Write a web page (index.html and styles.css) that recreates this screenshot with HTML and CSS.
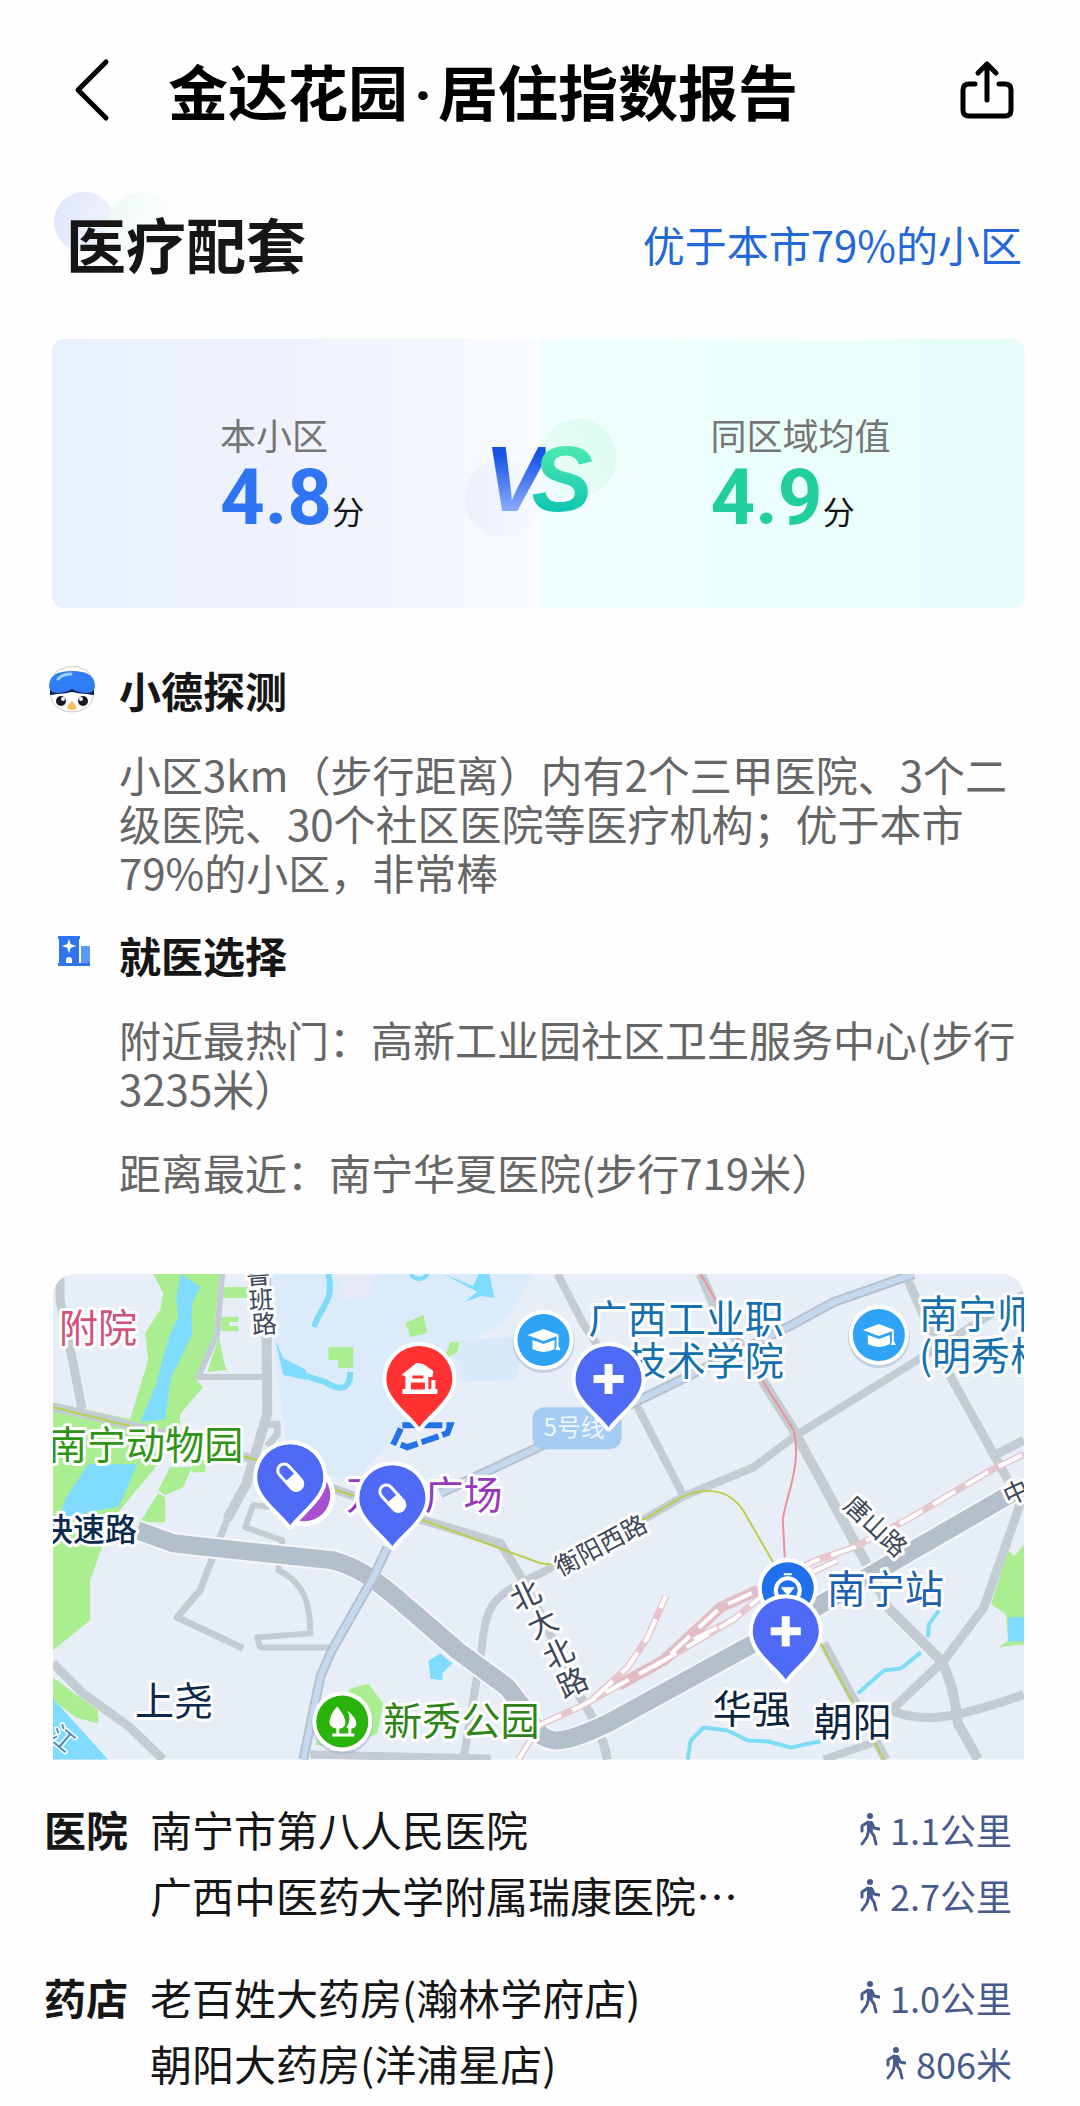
FILE: index.html
```html
<!DOCTYPE html>
<html lang="zh-CN">
<head>
  <meta charset="UTF-8" />
  <meta name="viewport" content="width=device-width, initial-scale=1.0" />
  <title>金达花园·居住指数报告</title>
  <link rel="stylesheet" href="styles.css">
</head>

<body>
  <header class="topbar">
    <button class="icon-btn" type="button" aria-label="返回">
      <svg width="40" height="64" viewBox="0 0 40 64" fill="none" stroke="#000" stroke-width="5" stroke-linecap="round" stroke-linejoin="round">
        <path d="M36 4 8 32l28 28"/>
      </svg>
    </button>
    <h1>金达花园<span class="dot">·</span>居住指数报告</h1>
    <button class="icon-btn" type="button" aria-label="分享">
      <svg width="56" height="60" viewBox="0 0 56 60" fill="none" stroke="#000" stroke-width="5" stroke-linecap="round" stroke-linejoin="round">
        <path d="M15 24H9q-6 0-6 6v20q0 6 6 6h36q6 0 6-6V30q0-6-6-6h-6M27 40V5M18 13 27 4l9 9"/>
      </svg>
    </button>
  </header>

  <main>
    <div class="section-head">
      <h2>医疗配套</h2>
      <a href="#rank">优于本市79%的小区</a>
    </div>

    <div class="compare">
      <div class="side mine">
        <p class="label">本小区</p>
        <p class="score"><b>4.8</b><span>分</span></p>
      </div>
      <div class="side avg">
        <p class="label">同区域均值</p>
        <p class="score"><b>4.9</b><span>分</span></p>
      </div>
      <div class="vs"><span class="v">V</span><span class="s">S</span></div>
    </div>

    <div class="tips">
      <section class="tip">
        <svg class="tip-icon" width="46" height="48" viewBox="0 0 46 48">
          <path d="M5 12Q6 3 14 3Q18-1 23 1Q29-1 33 3Q41 3 42 13L45 28Q42 46 23 46T1 28Z" fill="#fff" stroke="#c9c9c9"/>
          <path d="M1 20V29Q5 29 8 28Q15 28 23 26Q31 28 38 28Q41 29 45 29V20Z" fill="#12245e"/>
          <path d="M0 20Q0 5 23 5T46 20Q46 26 38 27Q30 27 23 23Q16 27 8 27Q0 26 0 20Z" fill="#2f7df2"/>
          <path d="M9 13q5-5 13-5" stroke="#9fd0ff" stroke-width="3" fill="none" stroke-linecap="round"/>
          <circle cx="12" cy="35" r="5" fill="#171a22"/>
          <circle cx="34" cy="35" r="5" fill="#171a22"/>
          <circle cx="14" cy="33" r="2" fill="#fff"/>
          <circle cx="32" cy="33" r="2" fill="#fff"/>
          <path d="M23 35q3 3 5 7q-5 4-10 0q2-5 5-7Z" fill="#f2bf5e"/>
        </svg>
        <div class="tip-body">
          <h3>小德探测</h3>
          <p>小区3km（步行距离）内有2个三甲医院、3个二级医院、30个社区医院等医疗机构；优于本市79%的小区，非常棒</p>
        </div>
      </section>

      <section class="tip">
        <svg class="tip-icon" width="46" height="40" viewBox="-5 0 46 40">
          <path d="M4 5h22v3h-1v24H5V8H4Z" fill="#2f74ee"/>
          <path d="M27 16q0-1 1-1h7q1 0 1 1v16h-9Z" fill="#5b97f7"/>
          <path d="M4 32h32v3H4Z" fill="#2f74ee"/>
          <path d="M15 11l1 3 3 1-3 1-1 3-1-3-3-1 3-1Z" fill="#fff" stroke="#fff" stroke-width="2"/>
          <path d="M12 32v-3q0-3 3-3t3 3v3Z" fill="#fff"/>
        </svg>
        <div class="tip-body">
          <h3>就医选择</h3>
          <p>附近最热门：高新工业园社区卫生服务中心(步行3235米）</p>
          <p>距离最近：南宁华夏医院(步行719米）</p>
        </div>
      </section>
    </div>

    <div class="map">
      <svg viewBox="0 0 970 485" role="img" aria-label="周边医疗地图">
        <defs>
          <path id="pin" d="M0 48C-10 34-33 20-33 0A33 33 0 0 1 33 0C33 20 10 34 0 48Z"/>
          <g id="cap">
            <circle r="31" fill="#9fb3c8" opacity=".5" cy="2"/>
            <circle r="30" fill="#fff"/>
            <circle r="26" fill="#2fa3f5"/>
            <path d="M-16-5 0-11 16-5 0 1ZM-11 0 0 4 11 0V9Q0 15-11 9ZM13-4h2V6l2 4h-5l1-4Z" fill="#fff"/>
          </g>
          <g id="pill" transform="rotate(-42)">
            <rect x="-8" y="-17" width="16" height="34" rx="8" fill="#fff"/>
            <path d="M-5 0v-9a5 5 0 0 1 10 0v9Z" fill="#4f6bf6"/>
          </g>
          <path id="plus" d="M-4-15h8V-4h11v8H4v11h-8V4h-11v-8h11Z" fill="#fff"/>
        </defs>

        <rect width="970" height="485" fill="#e8eef8"/>
        <path d="M220 0H480L450 50 420 64 407 66V105L345 160 310 198 285 205 235 182 222 86Z" fill="#dcebfa"/>
        <path d="M407 66 470 62 464 106 407 108Z" fill="#d9e9fa"/>
        <path d="M285 0h36l-5 24-26 2Z" fill="#e6eaf6"/>

        <!-- parks -->
        <g fill="#abee91">
          <path d="M100 0 110 19 107 36 92 59 95 86 77 145 0 128V376L37 346V306L50 270 55 250 105 190 127 160V140L150 113 142 105 160 70 166 0Z"/>
          <path d="M0 403 45 436V449L23 443 0 426Z"/>
          <path d="M170 13h24v11h-24ZM168 43h17v5h-9v4h9v5h-17ZM154 98 166 62 169 80 173 96Z"/>
          <path d="M275 73h25v21h-15v-8h-10ZM352 49 370 41 374 59 357 63ZM397 68h9l-2 10-14 8Z"/>
          <path d="M117 193h22l-9 20-18 8-7-5ZM139 186h14l-1 12h-13ZM87 248 105 219 112 223V248Z"/>
          <path d="M297 414 315 409 330 429 324 459 290 475 262 470Z"/>
          <path d="M954 276 960 282 970 270V370L945 373 954 366 952 340 937 330Z"/>
        </g>

        <!-- water -->
        <g fill="#7fdcff">
          <path d="M128 0 147 13 139 30V60L127 86 118 103 112 145 87 148 103 110 110 83 117 60 125 43 123 23Z"/>
          <path d="M35 190H84L66 232 28 240 6 246 12 225Z"/>
          <path d="M0 424 55 485H0ZM222 66 230 84 253 96V106L230 101Z"/>
          <path d="M375 386 387 379 399 389 389 399V406L377 404ZM954 343h16v24h-16Z"/>
          <path d="M390 0 420 12 425 0H436L441 24 428 22 411 28 424 18Z"/>
        </g>
        <g class="stream">
          <path class="wide" d="M275 0C282 28 265 35 261 53M250 101 272 108Q297 123 297 98"/>
          <path d="M357 0q8 10 18 0"/>
          <path d="M634 485 637 466 650 453 674 456 694 466 714 467 737 473 770 466"/>
          <path d="M804 419 830 396 847 394 867 378M874 363 875 350 885 336"/>
        </g>

        <!-- roads -->
        <g class="road">
          <path d="M7 0V26L20 89 29 135" stroke-width="9"/>
          <path d="M0 133 45 143 110 160 204 186 284 216 370 246 447 269 469 305 492 350 527 423Q548 455 554 485" stroke-width="9"/>
          <path d="M169 0 164 60 145 103H210" stroke-width="6"/>
          <path d="M213 0 214 140 193 210 174 245" stroke-width="10"/>
          <path d="M214 150h10v10l-10 12M174 245 147 316 124 343 190 374" stroke-width="7"/>
          <path d="M240 235 200 231 192 253 229 266 225 296C254 310 257 335 257 359L204 363 207 373H277" stroke-width="6"/>
          <path d="M504 0 530 50 584 133 630 222" stroke-width="8"/>
          <path d="M647 0 660 30 694 83 740 156 785 239 820 303 834 333 887 386Q900 410 904 449L924 485" stroke-width="10"/>
          <path d="M410 485 428 376C433 330 437 322 487 299L594 243 630 222 700 193 744 160 870 82 900 63 970 20" stroke-width="8"/>
          <path d="M854 6 897 103 954 206M937 183 970 166" stroke-width="9"/>
          <path d="M970 215 964 236 930 333 890 386 837 436C870 450 905 443 970 420" stroke-width="9"/>
          <path d="M770 485 820 468M257 480 437 484" stroke-width="8"/>
          <path d="M0 389 30 419 77 453 110 485" stroke-width="9"/>
        </g>
        <path class="express-edge" d="M84 256 120 269 137 271 280 286C304 293 320 303 354 333L404 376 454 413 475 440C488 474 505 472 554 449L700 369 774 326 854 279 970 212"/>
        <path class="express" d="M84 256 120 269 137 271 280 286C304 293 320 303 354 333L404 376 454 413 475 440C488 474 505 472 554 449L700 369 774 326 854 279 970 212"/>
        <g class="metro-road">
          <path d="M334 273 320 303 277 379 267 403 250 485"/>
          <path d="M387 219 487 172 594 122 734 53 780 28 860 0"/>
        </g>
        <g class="metro-line">
          <path d="M334 273 320 303 277 379 267 403 250 485"/>
          <path d="M387 219 487 172 594 122 734 53 780 28 860 0"/>
        </g>
        <path d="M770 369 832 485" stroke="#c3ccd2" stroke-width="9"/>
        <g class="line-green">
          <path d="M0 133 110 160 204 186 284 216 370 246 487 289 504 291 594 243 630 222C665 208 684 224 694 244L720 289M767 369 830 485"/>
        </g>
        <path d="M647 0 694 83 740 156C748 190 733 220 729 245L731 283" fill="none" stroke="#f28e98" stroke-width="2"/>

        <!-- railway -->
        <g class="rail-base">
          <path d="M465 485 487 450 527 432 610 386 667 333 704 316 760 287 800 273 854 245 937 196 970 180"/>
          <path d="M540 424 574 393 594 363 612 322M600 392 680 345 715 316M640 365 680 345M760 297 784 286"/>
        </g>
        <path d="M565 411 610 386 667 333 704 316" fill="none" stroke="#e3bcc6" stroke-width="11"/>
        <g class="rail-dash">
          <path d="M465 485 487 450 527 432 610 386 667 333 704 316 760 287 800 273 854 245 937 196 970 180"/>
          <path d="M540 424 574 393 594 363 612 322M600 392 680 345 715 316M640 365 680 345M760 297 784 286"/>
        </g>

        <!-- estate outline -->
        <path d="M349 151H397L394 159 354 173 341 168Z" fill="none" stroke="#2472e4" stroke-width="6" stroke-dasharray="18 4"/>

        <rect x="479" y="133" width="89" height="42" rx="12" fill="#a5cdf3"/>
        <text class="label-line" x="490" y="162">5号线</text>

        <g class="place">
          <text x="6" y="68" fill="#d0527a">附院</text>
          <text x="190" y="185" text-anchor="end" fill="#2f9418">南宁动物园</text>
          <text x="449" y="235" text-anchor="end" fill="#9438bd">万达广场</text>
          <text x="730" y="59" text-anchor="end" fill="#1470ae">广西工业职</text>
          <text x="730" y="101" text-anchor="end" fill="#1470ae">技术学院</text>
          <text x="865" y="54" fill="#1470ae">南宁师</text>
          <text x="865" y="96" fill="#1470ae">(明秀校</text>
          <text x="773" y="329" fill="#1c5fae">南宁站</text>
          <text x="330" y="461" fill="#2f8418">新秀公园</text>
          <text x="82" y="441" fill="#0c2a4d">上尧</text>
          <text x="659" y="449" fill="#0c2540">华强</text>
          <text x="760" y="462" fill="#0c2540">朝阳</text>
        </g>
        <text class="place-sm" x="84" y="267" text-anchor="end">快速路</text>

        <g class="street">
          <text transform="translate(205 1) rotate(-4)" y="9">鲁</text>
          <text transform="translate(208 26) rotate(-4)" y="9">班</text>
          <text transform="translate(211 50) rotate(-4)" y="9">路</text>
          <text transform="translate(547 271) rotate(-28)" y="9">衡阳西路</text>
          <text transform="translate(822 252) rotate(43)" y="9">唐山路</text>
          <text transform="translate(962 218) rotate(-25)" y="9">中</text>
          <g class="big">
            <text transform="translate(472 321) rotate(-25)" y="11">北</text>
            <text transform="translate(489 349) rotate(-25)" y="11">大</text>
            <text transform="translate(505 379) rotate(-25)" y="11">北</text>
            <text transform="translate(519 408) rotate(-25)" y="11">路</text>
          </g>
          <text class="river-name" transform="translate(9 464) rotate(40)" y="9">江</text>
        </g>

        <!-- round markers -->
        <use href="#cap" x="490" y="66"/>
        <use href="#cap" x="825" y="61"/>
        <circle cx="251" cy="221" r="31" fill="#fff"/>
        <circle cx="251" cy="221" r="26" fill="#a64fd0"/>
        <g transform="translate(289 447)">
          <circle r="31" fill="#9fb3c8" opacity=".5" cy="2"/>
          <circle r="30" fill="#fff"/>
          <circle r="26" fill="#2bb30d"/>
          <path d="M-5-15Q4-4 3 2Q2 7-3 7V12H6V7L4 6Q10-2 5-11Q15-3 14 3Q13 7 9 7V12H12V15H-10V12H-6V7Q-12 6-13 1Q-12-8-5-15Z" fill="#fff"/>
        </g>
        <g transform="translate(734 314)">
          <circle r="30" fill="#fff"/>
          <circle r="26" fill="#2070ee"/>
          <circle r="12" cy="2" fill="none" stroke="#fff" stroke-width="4"/>
          <path d="M-4-14h8M-5 0h10l-5 6Z" stroke="#fff" stroke-width="2" fill="#fff"/>
        </g>

        <!-- pins -->
        <g class="pin">
          <g transform="translate(366 105)">
            <use href="#pin" fill="#ff3131"/>
            <path d="M-18-4-3-16 4-15 14-8 13-2H9V10H12V1H16V10H18V15H-17V10H-14V-3Z" fill="#fff"/>
            <path d="M-7-2H4M-7 5H4V9H-7Z" stroke="#ff3131" stroke-width="3" fill="#ff3131"/>
          </g>
          <g transform="translate(237 203)"><use href="#pin" fill="#4f6bf6"/><use href="#pill"/></g>
          <g transform="translate(339 224)"><use href="#pin" fill="#4f6bf6"/><use href="#pill"/></g>
          <g transform="translate(555 105)"><use href="#pin" fill="#4f6bf6"/><use href="#plus"/></g>
          <g transform="translate(732 357)"><use href="#pin" fill="#4f6bf6"/><use href="#plus"/></g>
        </g>
      </svg>
    </div>

    <svg class="sprite" width="0" height="0" aria-hidden="true">
      <symbol id="walk" viewBox="0 0 20 34">
        <circle cx="10" cy="4" r="3" fill="#475c8d"/>
        <path d="M7 9h5l1 10-6 1Z" fill="#475c8d"/>
        <path d="M8 10 2 14v5M12 11l2 5 5 1M9 17l-2 8-5 7M10 18l4 6 2 8" fill="none" stroke="#475c8d" stroke-width="3" stroke-linecap="round" stroke-linejoin="round"/>
      </symbol>
    </svg>

    <div class="places">
      <section class="group">
        <h3>医院</h3>
        <ul>
          <li><span>南宁市第八人民医院</span><span class="dist"><svg width="20" height="34"><use href="#walk"/></svg>1.1公里</span></li>
          <li><span>广西中医药大学附属瑞康医院…</span><span class="dist"><svg width="20" height="34"><use href="#walk"/></svg>2.7公里</span></li>
        </ul>
      </section>
      <section class="group">
        <h3>药店</h3>
        <ul>
          <li><span>老百姓大药房(瀚林学府店)</span><span class="dist"><svg width="20" height="34"><use href="#walk"/></svg>1.0公里</span></li>
          <li><span>朝阳大药房(洋浦星店)</span><span class="dist"><svg width="20" height="34"><use href="#walk"/></svg>806米</span></li>
        </ul>
      </section>
    </div>
  </main>
</body>
</html>
```

FILE: styles.css
```css
* {
  box-sizing: border-box;
}

body {
  margin: 0;
  background: #fefefe;
  color: #161616;
  font-family: 'Noto Sans CJK SC', sans-serif;
  font-size: 42px;
}

h1, h2, h3, p, ul {
  margin: 0;
  padding: 0;
}

/* top bar */
.topbar {
  display: flex;
  align-items: center;
  padding: 45px 64px 0 70px;
}

.topbar h1 {
  flex: 1;
  margin-left: 58px;
  font-size: 60px;
  line-height: 90px;
  font-weight: 700;
  color: #000;
}

.topbar .dot {
  padding: 0 6px;
  font-family: Roboto, sans-serif;
  line-height: 60px;
}

.icon-btn {
  display: flex;
  padding: 0;
  border: none;
  background: none;
  cursor: pointer;
}

/* section title */
.section-head {
  display: flex;
  justify-content: space-between;
  align-items: center;
  margin-top: 63px;
  padding: 0 58px 0 66px;
}

.section-head h2 {
  position: relative;
  z-index: 0;
  font-size: 60px;
  line-height: 90px;
  font-weight: 700;
}

.section-head h2::before,
.section-head h2::after {
  content: "";
  position: absolute;
  z-index: -1;
  top: -6px;
  border-radius: 50%;
}

.section-head h2::before {
  left: -12px;
  width: 60px;
  height: 60px;
  background: linear-gradient(110deg, #dfe5fb, #f2f5fe);
}

.section-head h2::after {
  left: 40px;
  width: 72px;
  height: 72px;
  background: linear-gradient(110deg, #ebfaf3, #fefefe 80%);
}

.section-head a {
  color: #2468d8;
  text-decoration: none;
}

/* score compare */
.compare {
  position: relative;
  display: flex;
  gap: 4px;
  margin: 51px 55px 0 52px;
}

.side {
  flex: 1;
  padding: 70px 0 71px;
}

.mine {
  padding-left: 168px;
  border-radius: 12px 0 0 12px;
  background: linear-gradient(90deg, #e8f1fe, #f0f2fe 50%, #f7fafe);
}

.avg {
  padding-left: 172px;
  border-radius: 0 12px 12px 0;
  background: linear-gradient(90deg, #f2fefe, #ebfefb 40%, #e9fefa);
}

.label {
  font-size: 36px;
  line-height: 50px;
  color: #757575;
  white-space: nowrap;
}

.score {
  display: flex;
  align-items: baseline;
  height: 78px;
  line-height: 78px;
}

.score b {
  font-family: Roboto, sans-serif;
  font-size: 78px;
  font-weight: 700;
}

.mine b {
  color: #2f74f2;
}

.avg b {
  color: #20cf9b;
}

.score span {
  font-size: 32px;
  line-height: 40px;
}

.vs {
  position: absolute;
  top: 52%;
  left: 50%;
  display: flex;
  transform: translate(-50%, -50%);
  font-family: 'Liberation Sans', sans-serif;
  font-size: 92px;
  line-height: 100px;
  font-weight: 700;
  font-style: italic;
}

.vs::before,
.vs::after {
  content: "";
  position: absolute;
  z-index: -1;
  width: 78px;
  height: 78px;
  border-radius: 50%;
}

.vs::before {
  left: -20px;
  top: 30px;
  background: linear-gradient(90deg, #ebf0fe, #f7fafe);
}

.vs::after {
  right: -24px;
  top: -10px;
  background: linear-gradient(60deg, #effefb, #d8fbef);
}

.vs span {
  background-clip: text;
  -webkit-background-clip: text;
  color: transparent;
}

.vs .v {
  background-image: linear-gradient(#1453e6 25%, #8aa8fa 80%);
}

.vs .s {
  margin-left: -14px;
  background-image: linear-gradient(#48e8af 20%, #12c8b2 80%);
}

/* text tips */
.tips {
  display: flex;
  flex-direction: column;
  gap: 35px;
  margin: 58px 52px 0;
}

.tip {
  display: grid;
  grid-template-columns: 46px 1fr;
  column-gap: 21px;
}

.tip-icon {
  margin-left: -3px;
}

.tip-body {
  display: flex;
  flex-direction: column;
  gap: 35px;
}

.tip h3 {
  font-size: 42px;
  line-height: 48px;
  font-weight: 700;
}

.tip p {
  line-height: 49px;
  color: #666;
}

/* map */
.map {
  margin: 78px 56px 0 53px;
  border-radius: 22px 22px 0 0;
  overflow: hidden;
}

.map svg {
  display: block;
  width: 100%;
  height: auto;
}

.stream {
  fill: none;
  stroke: #7fdcf6;
  stroke-width: 4px;
  stroke-linejoin: round;
}

.stream .wide {
  stroke-width: 6px;
}

.road path {
  fill: none;
  stroke: #c2ccd2;
  stroke-linejoin: round;
}

.express-edge {
  fill: none;
  stroke: #f4f7fb;
  stroke-width: 22px;
}

.express {
  fill: none;
  stroke: #b3bfcb;
  stroke-width: 18px;
}

.metro-road {
  fill: none;
  stroke: #b5c1cd;
  stroke-width: 10px;
}

.metro-line {
  fill: none;
  stroke: #c6d8f0;
  stroke-width: 6px;
}

.line-green {
  fill: none;
  stroke: #b9cf4c;
  stroke-width: 2px;
}

.rail-base {
  fill: none;
  stroke: #e6c5ce;
  stroke-width: 7px;
}

.rail-dash {
  fill: none;
  stroke: #fff;
  stroke-width: 4px;
  stroke-dasharray: 26 12;
}

.map text {
  paint-order: stroke;
  stroke: #fff;
  stroke-width: 6px;
  stroke-linejoin: round;
}

.map .label-line {
  font-size: 24px;
  fill: #eef6fe;
  stroke: none;
}

.place {
  font-size: 39px;
}

.place-sm {
  font-size: 32px;
  font-weight: 500;
  fill: #0c2a4d;
}

.street {
  font-size: 25px;
  fill: #3c4658;
  text-anchor: middle;
}

.street .big {
  font-size: 30px;
}

.map .river-name {
  fill: #4d8ab5;
  stroke-width: 3px;
}

.pin use[href="#pin"] {
  stroke: #fff;
  stroke-width: 8px;
  stroke-linejoin: round;
  paint-order: stroke;
}

.sprite {
  position: absolute;
}

/* nearby places */
.places {
  display: flex;
  flex-direction: column;
  gap: 36px;
  padding: 36px 68px 10px 44px;
}

.group {
  display: grid;
  grid-template-columns: 84px 1fr;
  column-gap: 22px;
  line-height: 66px;
}

.group h3 {
  font-size: 42px;
  font-weight: 700;
}

.group ul {
  list-style: none;
}

.group li {
  display: flex;
  justify-content: space-between;
}

.dist {
  display: flex;
  align-items: center;
  gap: 10px;
  font-size: 36px;
  color: #475c8d;
}
```
